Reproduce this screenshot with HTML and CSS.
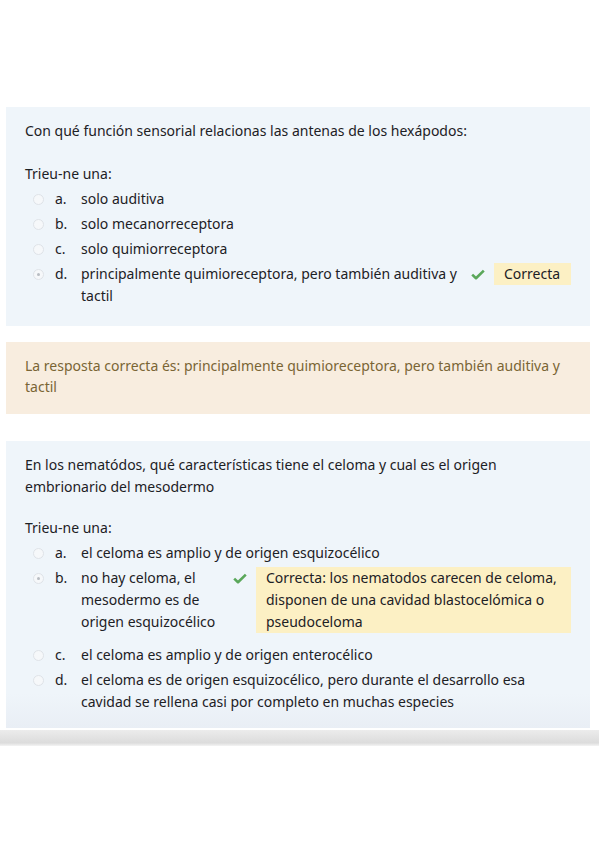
FILE: index.html
```html
<!DOCTYPE html>
<html lang="es">
<head>
<meta charset="utf-8">
<title>Quiz</title>
<link rel="stylesheet" href="styles.css">
</head>
<body>
<div class="page">
  <section class="card card-first">
    <p class="qtext">Con qué función sensorial relacionas las antenas de los hexápodos:</p>
    <p class="prompt">Trieu-ne una:</p>
    <div class="answers">
      <div class="opt"><span class="radio"></span><span class="letter">a.</span><span class="otext">solo auditiva</span></div>
      <div class="opt"><span class="radio"></span><span class="letter">b.</span><span class="otext">solo mecanorreceptora</span></div>
      <div class="opt"><span class="radio"></span><span class="letter">c.</span><span class="otext">solo quimiorreceptora</span></div>
      <div class="opt"><span class="radio checked"></span><span class="letter">d.</span><span class="otext">principalmente quimioreceptora, pero también auditiva y tactil</span>
        <svg class="tick" viewBox="0 0 14 11" width="14" height="11"><path d="M1.2 5.6 L5 9.2 L12.8 1.6" fill="none" stroke="#5aa75a" stroke-width="2.6" stroke-linejoin="round"/></svg>
        <span class="fb fb-short">Correcta</span></div>
    </div>
  </section>

  <div class="rightanswer">La resposta correcta és: principalmente quimioreceptora, pero también auditiva y tactil</div>

  <section class="card card-second">
    <p class="qtext">En los nematódos, qué características tiene el celoma y cual es el origen embrionario del mesodermo</p>
    <p class="prompt prompt2">Trieu-ne una:</p>
    <div class="answers">
      <div class="opt"><span class="radio"></span><span class="letter">a.</span><span class="otext">el celoma es amplio y de origen esquizocélico</span></div>
      <div class="opt opt-fb"><span class="radio checked"></span><span class="letter">b.</span><span class="otext">no hay celoma, el mesodermo es de origen esquizocélico</span>
        <svg class="tick" viewBox="0 0 14 11" width="14" height="11"><path d="M1.2 5.6 L5 9.2 L12.8 1.6" fill="none" stroke="#5aa75a" stroke-width="2.6" stroke-linejoin="round"/></svg>
        <span class="fb fb-long">Correcta: los nematodos carecen de celoma, disponen de una cavidad blastocelómica o pseudoceloma</span></div>
      <div class="opt"><span class="radio"></span><span class="letter">c.</span><span class="otext">el celoma es amplio y de origen enterocélico</span></div>
      <div class="opt"><span class="radio"></span><span class="letter">d.</span><span class="otext">el celoma es de origen esquizocélico, pero durante el desarrollo esa cavidad se rellena casi por completo en muchas especies</span></div>
    </div>
  </section>
  <div class="shadowbar"></div>
</div>
</body>
</html>
```
FILE: styles.css
```css
html, body {
  margin: 0;
  padding: 0;
  background: #ffffff;
}
body {
  font-family: "Noto Sans", "Open Sans", sans-serif;
  font-size: 14px;
  color: #1d2125;
}
.page {
  padding-top: 107px;
}
p {
  margin: 0;
}
.card {
  margin: 0 9px 0 6px;
  background: #eff5fa;
  padding: 13px 19px 19px 19px;
  line-height: 22px;
}
.card-second {
  margin-top: 27px;
  padding-bottom: 15px;
  background: linear-gradient(#eff5fa 0, #eff5fa 88%, #e9eef5 100%);
}
.prompt {
  margin-top: 21px;
}
.prompt2 {
  margin-top: 19px;
}
.answers {
  margin-top: 3px;
  padding-left: 8px;
}
.opt {
  display: flex;
  align-items: flex-start;
  margin-bottom: 3px;
}
.opt:last-child {
  margin-bottom: 0;
}
.opt-fb {
  margin-bottom: 11px;
}
.radio {
  flex: none;
  box-sizing: border-box;
  width: 11px;
  height: 11px;
  margin-top: 6px;
  border: 1px solid #dfe3e8;
  border-radius: 50%;
  background: #f6f8fa;
  position: relative;
}
.radio.checked::after {
  content: "";
  position: absolute;
  left: 3px;
  top: 3px;
  width: 3px;
  height: 3px;
  border-radius: 50%;
  background: #b8bcc2;
}
.letter {
  flex: none;
  width: 26px;
  margin-left: 11px;
}
.otext {
  flex: 1 1 auto;
  min-width: 0;
}
.tick {
  flex: none;
  margin: 6px 9px 0 10px;
}
.fb {
  flex: none;
  background: #fcf0c4;
  padding: 0 10px;
}
.fb-short {
  width: 57px;
}
.fb-long {
  width: 295px;
}
.rightanswer {
  margin: 16px 9px 0 6px;
  background: #f8eddf;
  color: #7a6535;
  padding: 13px 19px 17px 19px;
  line-height: 21px;
}
.shadowbar {
  height: 16px;
  margin-top: 2px;
  background: linear-gradient(#ececec, #dcdcdc 80%, #f4f4f4);
}
```
